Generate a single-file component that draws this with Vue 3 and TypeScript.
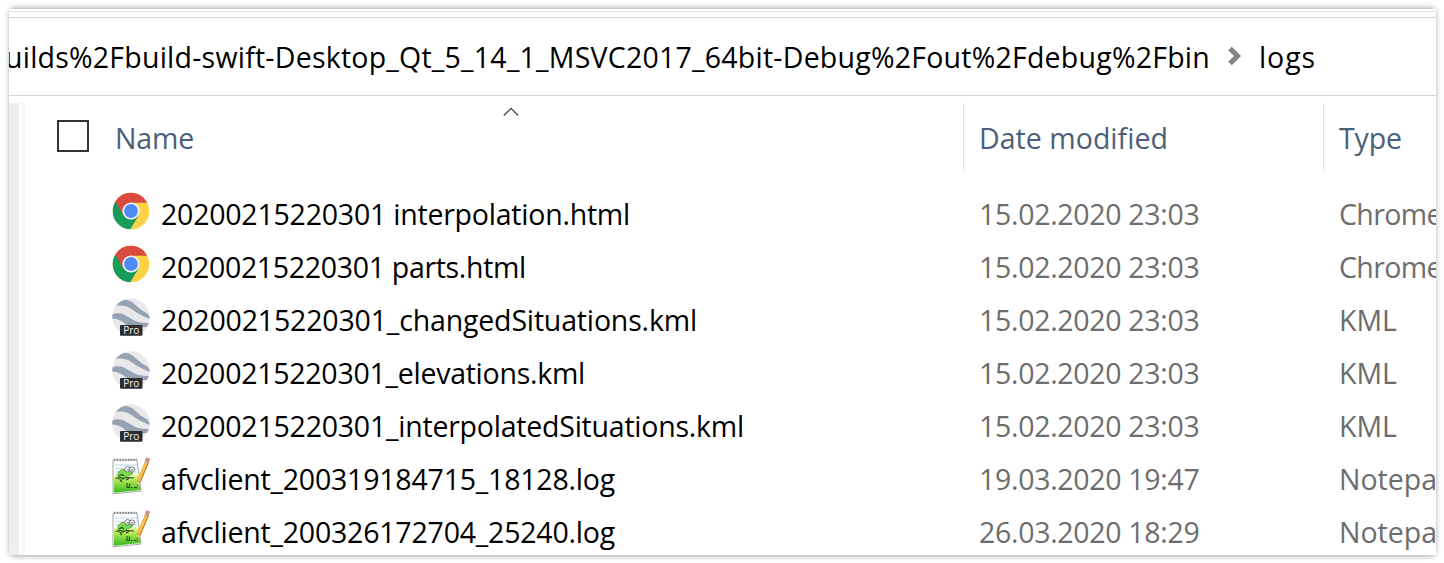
<script setup lang="ts">
type Kind = 'chrome' | 'earth' | 'notepad'

interface LogFile {
  name: string
  width: number
  date: string
  kind: Kind
  type: string
  typeWidth: number
}

const files: LogFile[] = [
  { name: '20200215220301 interpolation.html', width: 469, date: '15.02.2020 23:03', kind: 'chrome', type: 'Chrome', typeWidth: 103 },
  { name: '20200215220301 parts.html', width: 365, date: '15.02.2020 23:03', kind: 'chrome', type: 'Chrome', typeWidth: 103 },
  { name: '20200215220301_changedSituations.kml', width: 536, date: '15.02.2020 23:03', kind: 'earth', type: 'KML', typeWidth: 58 },
  { name: '20200215220301_elevations.kml', width: 424, date: '15.02.2020 23:03', kind: 'earth', type: 'KML', typeWidth: 58 },
  { name: '20200215220301_interpolatedSituations.kml', width: 583, date: '15.02.2020 23:03', kind: 'earth', type: 'KML', typeWidth: 58 },
  { name: 'afvclient_200319184715_18128.log', width: 454, date: '19.03.2020 19:47', kind: 'notepad', type: 'Notepa', typeWidth: 98 },
  { name: 'afvclient_200326172704_25240.log', width: 454, date: '26.03.2020 18:29', kind: 'notepad', type: 'Notepa', typeWidth: 98 },
]

// Spreads a label's letters so that it takes exactly the given width.
const vFit = {
  mounted(el: HTMLElement, binding: { value: number }) {
    const natural = el.getBoundingClientRect().width
    const count = (el.textContent ?? '').length
    el.style.letterSpacing = `${(binding.value - natural) / count}px`
  },
}
</script>

<template>
  <main class="stage">
    <section class="window">
      <div class="strip"></div>
      <nav class="address">
        <span class="path"><span v-fit="1205">uilds%2Fbuild-swift-Desktop_Qt_5_14_1_MSVC2017_64bit-Debug%2Fout%2Fdebug%2Fbin</span></span>
        <svg class="chevron" viewBox="0 0 14 20"><path d="M2 2.5 9.5 10 2 17.5" fill="none" stroke="#858585" stroke-width="5" /></svg>
        <span v-fit="57">logs</span>
      </nav>
      <div class="body">
        <div class="gutter"></div>
        <div class="splitter"></div>
        <div class="list">
          <header class="head">
            <div class="col name">
              <span class="box"></span>
              <span v-fit="79">Name</span>
              <svg class="sort" viewBox="0 0 16 10"><path d="M.8 8.5 8 1.3l7.2 7.2" fill="none" stroke="#444" stroke-width="1.3" /></svg>
            </div>
            <div class="col date"><span v-fit="189">Date modified</span></div>
            <div class="col type"><span v-fit="63">Type</span></div>
          </header>
          <div v-for="file in files" :key="file.name" class="row">
            <div class="cell file">
              <svg v-if="file.kind === 'chrome'" class="icon" viewBox="0 0 38 38">
                <circle cx="19" cy="19" r="18.3" fill="#fdd247" />
                <path d="M3.2 9.8A18.3 18.3 0 0 1 35.2 10.8H19L11 23.6Z" fill="#d94b3f" />
                <path d="M3.4 9.5A18.3 18.3 0 0 0 18.3 37.3L26.6 23.5 19 27 11.4 23.3Z" fill="#169b58" />
                <circle cx="19" cy="19" r="8.6" fill="#f5f7f6" />
                <circle cx="19" cy="19" r="6.9" fill="#4f8af5" />
              </svg>
              <svg v-else-if="file.kind === 'earth'" class="icon" viewBox="0 0 38 38">
                <defs>
                  <clipPath id="globe"><circle cx="19" cy="19" r="18.8" /></clipPath>
                </defs>
                <g clip-path="url(#globe)">
                  <rect width="38" height="38" fill="#e9e9eb" />
                  <path d="M1 9C5 4 10 1 16 2.5 22 4 26 10 31 13 35 15 37 16 38 21 33 19 28 17 23 13.5 16 8 10 6 1 9Z" fill="#96a1b2" />
                  <path d="M0 16.5C7 13.5 12 16 18 20 25 24.5 31 25.5 38 25V29H17C12 25 8 20.5 0 20.5Z" fill="#96a1b2" />
                </g>
                <rect x="8" y="27" width="22.5" height="10.8" rx="1" fill="#2b2d2f" />
                <text class="pro" x="19.2" y="36" text-anchor="middle">Pro</text>
              </svg>
              <svg v-else class="icon" viewBox="0 0 38 38">
                <defs>
                  <linearGradient id="grass" x2="0" y2="1">
                    <stop offset="0" stop-color="#f0f8a8" />
                    <stop offset=".4" stop-color="#a4e44c" />
                    <stop offset="1" stop-color="#35b51c" />
                  </linearGradient>
                </defs>
                <path d="M1 3H25L29 34 1 37Z" fill="#fbfdff" stroke="#a5a9a5" stroke-width="1" />
                <path d="M3 8H25M3 11.5H25M3 15H25" stroke="#bdd9ee" stroke-width="1" />
                <path d="M2 18 27 17 28.5 33 2 35.8Z" fill="url(#grass)" />
                <path d="M2 2.8H25" stroke="#777" stroke-width="2" stroke-dasharray="1.2 1.6" />
                <path d="M6 20C5 15 9 11 14 13L17 10 21 12 20 17 15 19 11 23 6 22Z" fill="#78dc4c" stroke="#3d8f38" stroke-width=".7" />
                <circle cx="15.5" cy="12.3" r="2.7" fill="#fff" stroke="#444" stroke-width=".7" />
                <circle cx="20" cy="12.5" r="2.6" fill="#fff" stroke="#444" stroke-width=".7" />
                <path d="M16 12v1.5M20 12v1.5" stroke="#111" stroke-width="1" />
                <path d="M3.5 21.5 8 20.5 11 21.5 15 20.5 22 21M7 19 10 17.5 12 19M8 23 10 25M14 23 17 21.5" fill="none" stroke="#354126" stroke-width="1.1" />
                <path d="M15 26V30.5H17.5V26.5M19 30.5H20.5M22 30.5H25" fill="none" stroke="#244d18" stroke-width="1.1" />
                <path d="M35.3 4.5 26.7 25" stroke="#b87924" stroke-width="4" />
                <path d="M34.9 4.5 26.7 24" stroke="#ffc34d" stroke-width="2.5" />
                <path d="M36.2 1 34.8 4.5" stroke="#d98776" stroke-width="4" />
                <path d="M35 4 34.3 5.7" stroke="#aaa" stroke-width="4" />
                <path d="M25 24.2 28.5 25.7 24.8 29.5Z" fill="#e9c493" />
                <path d="M24.8 29.5 25 27.4 26.2 28Z" fill="#222" />
              </svg>
              <span v-fit="file.width">{{ file.name }}</span>
            </div>
            <div class="cell date"><span v-fit="220.5">{{ file.date }}</span></div>
            <div class="cell type"><span v-fit="file.typeWidth">{{ file.type }}</span></div>
          </div>
        </div>
      </div>
    </section>
  </main>
</template>

<style>
body {
  margin: 0;
  background: #fff;
}
</style>

<style scoped>
.stage {
  box-sizing: border-box;
  width: 1444px;
  height: 563px;
  padding: 9px 8px 8px 9px;
  overflow: hidden;
  font-family: "Open Sans", "Noto Sans", sans-serif;
  font-size: 28.5px;
  line-height: 38px;
  color: #000;
  white-space: nowrap;
}
.window {
  display: flex;
  flex-direction: column;
  height: 546px;
  overflow: hidden;
  background: #fff;
  box-shadow:
    0 0 8px rgba(0, 0, 0, 0.14),
    0 -3px 5px -2px rgba(0, 0, 0, 0.26),
    0 3px 5px -2px rgba(0, 0, 0, 0.26);
}
.strip {
  flex: none;
  box-sizing: border-box;
  height: 9px;
  border-bottom: 1px solid #d6d6d6;
  background: linear-gradient(#fff 2px, #e3e3e3 2px, #e3e3e3 3px, #fff 3px);
}
.address {
  flex: none;
  box-sizing: border-box;
  display: flex;
  align-items: center;
  height: 78px;
  border-bottom: 1px solid #d6d6d6;
}
.path {
  flex: none;
  width: 1206px;
  margin-left: -4px;
}
.chevron {
  flex: none;
  width: 14px;
  height: 20px;
  margin: 0 17px 2px 17px;
}
.body {
  display: flex;
  flex: 1;
  padding-top: 7px;
  min-height: 0;
}
.gutter {
  flex: none;
  width: 10px;
  background: #eee;
}
.splitter {
  flex: none;
  width: 3px;
  margin-left: 3px;
  background: #f7f7f7;
}
.list {
  flex: 1;
  min-width: 0;
  overflow: hidden;
}
.head {
  display: flex;
  height: 67px;
  margin-bottom: 18px;
  color: #4c607a;
}
.col {
  box-sizing: border-box;
  position: relative;
  display: flex;
  flex: none;
  align-items: center;
  padding-top: 2px;
}
.col.name {
  width: 938px;
  padding-left: 32px;
}
.col.date,
.col.type {
  width: 360px;
  padding-left: 15px;
  border-left: 1px solid #e2e2e2;
}
.box {
  box-sizing: border-box;
  width: 32px;
  height: 32px;
  margin: 0 26px 3px 0;
  border: 2px solid #333;
}
.sort {
  position: absolute;
  left: 477.5px;
  top: 4px;
  width: 16px;
  height: 10px;
}
.row {
  display: flex;
  height: 53px;
}
.cell {
  box-sizing: border-box;
  display: flex;
  flex: none;
  align-items: center;
  padding-bottom: 2px;
}
.cell.file {
  width: 938px;
  padding-left: 87px;
}
.cell.date,
.cell.type {
  width: 360px;
  padding-left: 16px;
  color: #6d6d6d;
}
.icon {
  flex: none;
  width: 38px;
  height: 38px;
  margin: 0 11px 5px 0;
}
.pro {
  font-size: 10px;
  letter-spacing: 0;
  fill: #f2f2f2;
}
</style>
